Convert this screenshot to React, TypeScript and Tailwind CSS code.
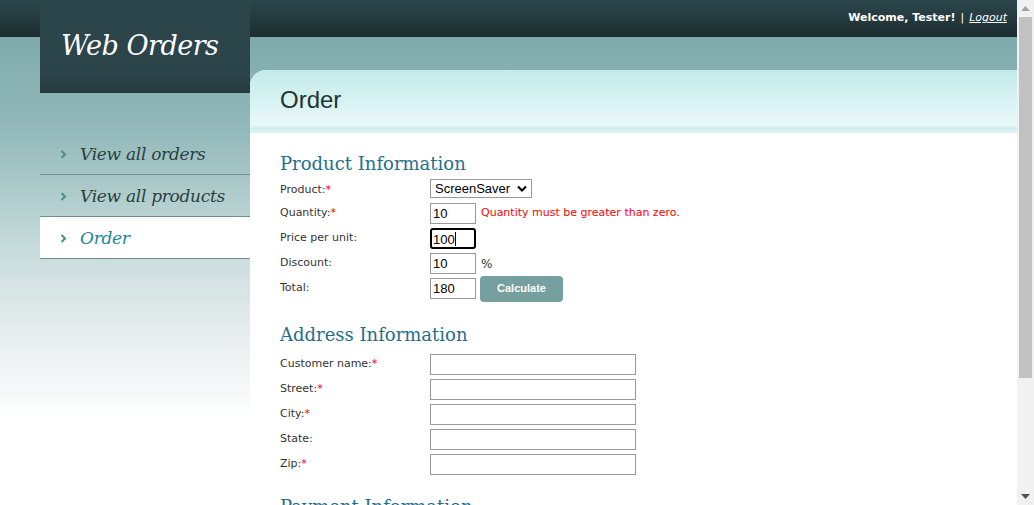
const serif = { fontFamily: '"DejaVu Serif", Georgia, serif' };

function Field({ label, required, children, labelClass = "" }: { label: string; required?: boolean; children: React.ReactNode; labelClass?: string }) {
  return (
    <div className="flex h-[25px] items-center">
      <div className={`w-[150px] text-[11px] text-[#333] ${labelClass}`}>
        {label}
        {required && <span className="text-[#e00]">*</span>}
      </div>
      {children}
    </div>
  );
}

function TextBox({ value = "", w = "w-[206px]", focused = false }: { value?: string; w?: string; focused?: boolean }) {
  return (
    <div
      className={
        focused
          ? `${w} h-[21px] rounded-[3px] border-2 border-black bg-white px-[1px] text-[13px] leading-[17px] text-black`
          : `${w} h-[21px] border border-[#999] bg-white px-[2px] text-[13px] leading-[19px] text-black`
      }
      style={{ fontFamily: '"Liberation Sans", Arial, sans-serif' }}
    >
      {value}
      {focused && <span className="inline-block h-[14px] w-px translate-y-[2px] bg-black" />}
    </div>
  );
}

export default function App() {
  const navItems = ["View all orders", "View all products", "Order"];
  return (
    <div
      className="flex h-[505px] w-[1034px] overflow-hidden bg-[linear-gradient(to_bottom,#2c474c_0px,#1d2d30_37px,#7eaaab_37px,#93b9ba_130px,#c8dcdc_250px,#e5ecec_330px,#ffffff_420px)]"
      style={{ fontFamily: '"DejaVu Sans", Verdana, sans-serif' }}
    >
      <div className="flex flex-1">
        {/* Sidebar */}
        <div className="w-[250px] shrink-0 pl-[40px]">
          <div className="flex h-[93px] items-center bg-[linear-gradient(to_bottom,#2c464b_0%,#2b4449_80%,#243a3e_100%)] pl-[21px]">
            <span className="text-[27px] italic tracking-[-0.5px] text-white" style={serif}>
              Web Orders
            </span>
          </div>
          <ul className="mt-[40px]">
            {navItems.map((item) => {
              const active = item === "Order";
              return (
                <li
                  key={item}
                  className={`flex h-[42px] items-center border-b border-[#6e8f8f] pl-[20px] pt-[2px] ${active ? "bg-white" : ""}`}
                >
                  <svg width="7" height="9" viewBox="0 0 7 9" className="mr-[13px]">
                    <path d="M1.5 1 L5 4.5 L1.5 8" fill="none" stroke="#4f8b8d" strokeWidth="2" />
                  </svg>
                  <span
                    className={`text-[17px] italic tracking-[-0.3px] ${active ? "text-[#1b8795]" : "text-[#2b3f40]"}`}
                    style={serif}
                  >
                    {item}
                  </span>
                </li>
              );
            })}
          </ul>
        </div>

        {/* Main */}
        <div className="flex flex-1 flex-col">
          <div className="flex h-[37px] items-center justify-end pr-[10px] text-[11px] text-white">
            <span className="font-bold">Welcome, Tester!</span>
            <span className="mx-[5px]">|</span>
            <span className="italic underline">Logout</span>
          </div>
          <div className="mt-[33px] flex-1 overflow-hidden rounded-tl-[16px] bg-white">
            <div className="flex h-[63px] items-center bg-[linear-gradient(to_bottom,#c3eaea_0%,#d8f2f2_50%,#eaf8f8_88%,#d0eded_92%,#dff3f3_100%)] pl-[30px] pb-[3px]">
              <h1 className="text-[24px] text-[#1f3434]" style={{ fontFamily: '"Liberation Sans", Arial, sans-serif' }}>
                Order
              </h1>
            </div>

            <div className="pl-[30px] pt-[18px]">
              <h2 className="text-[18px] leading-[26px] text-[#256f8c]" style={serif}>
                Product Information
              </h2>
              <div className="-mt-[1px]">
                <Field label="Product:" required labelClass="pt-[4px]">
                  <div
                    className="flex h-[19px] w-[102px] items-center justify-between border border-[#999] bg-white pl-[4px] pr-[4px] text-[13px] text-black"
                    style={{ fontFamily: '"Liberation Sans", Arial, sans-serif' }}
                  >
                    ScreenSaver
                    <svg width="10" height="7" viewBox="0 0 10 7">
                      <path d="M1 1.5 L5 5.5 L9 1.5" fill="none" stroke="black" strokeWidth="2" />
                    </svg>
                  </div>
                </Field>
                <Field label="Quantity:" required>
                  <TextBox value="10" w="w-[46px]" />
                  <span className="ml-[5px] text-[11px] text-[#f00]">Quantity must be greater than zero.</span>
                </Field>
                <Field label="Price per unit:">
                  <TextBox value="100" w="w-[46px]" focused />
                </Field>
                <Field label="Discount:">
                  <TextBox value="10" w="w-[46px]" />
                  <span className="ml-[5px] text-[12px] text-[#333]">%</span>
                </Field>
                <Field label="Total:">
                  <TextBox value="180" w="w-[46px]" />
                  <button
                    className="ml-[4px] h-[26px] w-[83px] rounded-[4px] bg-[#76a0a0] text-[11px] font-bold text-white"
                    style={{ fontFamily: '"Liberation Sans", Arial, sans-serif' }}
                  >
                    Calculate
                  </button>
                </Field>
              </div>

              <h2 className="mt-[21px] text-[18px] leading-[26px] text-[#256f8c]" style={serif}>
                Address Information
              </h2>
              <div className="mt-[4px]">
                <Field label="Customer name:" required>
                  <TextBox />
                </Field>
                <Field label="Street:" required>
                  <TextBox />
                </Field>
                <Field label="City:" required>
                  <TextBox />
                </Field>
                <Field label="State:">
                  <TextBox />
                </Field>
                <Field label="Zip:" required>
                  <TextBox />
                </Field>
              </div>

              <h2 className="mt-[17px] text-[18px] leading-[26px] text-[#256f8c]" style={serif}>
                Payment Information
              </h2>
            </div>
          </div>
        </div>
      </div>

      {/* Scrollbar */}
      <div className="flex w-[17px] shrink-0 flex-col items-center bg-[#f1f1f1]">
        <div className="flex h-[17px] items-center justify-center">
          <svg width="9" height="5" viewBox="0 0 9 5">
            <path d="M0 5 L4.5 0 L9 5 Z" fill="#a3a3a3" />
          </svg>
        </div>
        <div className="h-[361px] w-[13px] bg-[#c1c1c1]" />
        <div className="flex-1" />
        <div className="flex h-[17px] items-center justify-center">
          <svg width="9" height="5" viewBox="0 0 9 5">
            <path d="M0 0 L4.5 5 L9 0 Z" fill="#505050" />
          </svg>
        </div>
      </div>
    </div>
  );
}
